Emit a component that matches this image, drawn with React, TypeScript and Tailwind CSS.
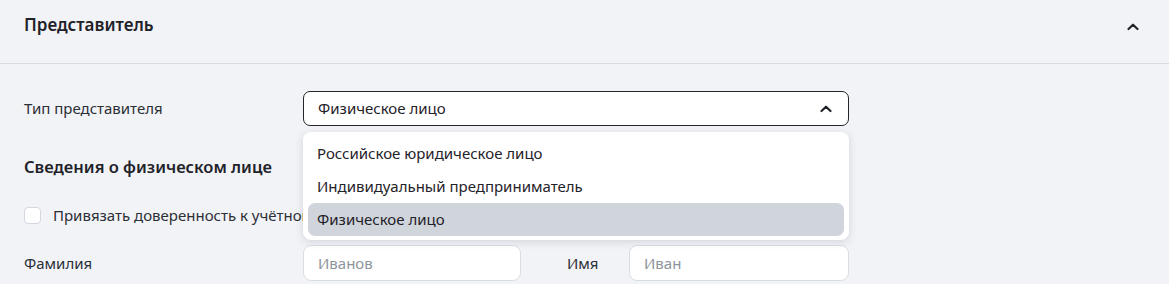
import { useState } from "react";

const options = ["Российское юридическое лицо", "Индивидуальный предприниматель", "Физическое лицо"];

function Caret({ className = "" }: { className?: string }) {
  return (
    <svg viewBox="0 0 16 16" className={className} fill="none" stroke="currentColor" strokeWidth="2.2" strokeLinecap="round" strokeLinejoin="round">
      <path d="M3.5 10L8 5.7L12.5 10" />
    </svg>
  );
}

export default function App() {
  const [value, setValue] = useState("Физическое лицо");
  const [open, setOpen] = useState(true);

  return (
    <div className="w-full h-[284px] overflow-hidden bg-[#f2f3f7] text-[#1f2229] font-['Noto_Sans',sans-serif]">
      {/* Section header */}
      <div className="h-[64px] border-b border-[#d8dbe0] flex items-start justify-between pl-6 pr-[28px] pt-[13px]">
        <h2 className="text-[17px] leading-[24px] font-semibold">Представитель</h2>
        <Caret className="w-[16px] h-[16px] mt-[6px] text-[#1f2229]" />
      </div>

      <div className="px-6 pt-[27px]">
        {/* Representative type */}
        <div className="flex items-center">
          <span className="w-[279px] text-[15px] text-[#2b2f36]">Тип представителя</span>
          <div className="relative w-[546px]">
            <button
              onClick={() => setOpen(!open)}
              className="w-full h-[35px] bg-white border border-[#22252b] rounded-[7px] flex items-center justify-between pl-[14px] pr-[14px] text-[15px] text-left"
            >
              <span>{value}</span>
              <Caret className="w-[16px] h-[16px] text-[#1f2229]" />
            </button>
            {open && (
              <div className="absolute z-10 top-[41px] left-0 right-0 bg-white rounded-[8px] shadow-[0_2px_8px_rgba(30,40,60,0.15)] px-[5px] pt-[5px] pb-[4px]">
                {options.map((o) => (
                  <div
                    key={o}
                    onClick={() => { setValue(o); setOpen(false); }}
                    className={`h-[33px] rounded-[7px] flex items-center px-[9px] text-[15px] cursor-pointer ${o === value ? "bg-[#d0d5dc]" : ""}`}
                  >
                    {o}
                  </div>
                ))}
              </div>
            )}
          </div>
        </div>

        <h3 className="mt-[29px] text-[16.5px] leading-[24px] font-semibold">Сведения о физическом лице</h3>

        {/* Checkbox */}
        <label className="mt-[27px] flex items-center gap-[12px] h-[18px]">
          <span className="w-[17px] h-[17px] bg-white border border-[#d3d7de] rounded-[4px]" />
          <span className="text-[15px] text-[#2b2f36] whitespace-nowrap">Привязать доверенность к учётной записи</span>
        </label>

        {/* Name fields */}
        <div className="mt-[21px] flex items-center">
          <span className="w-[279px] text-[15px] text-[#2b2f36]">Фамилия</span>
          <input
            placeholder="Иванов"
            className="w-[218px] h-[36px] bg-white border border-[#d9dde3] rounded-[8px] px-[14px] text-[15px] placeholder:text-[#8e949c] outline-none"
          />
          <span className="ml-[46px] w-[62px] text-[15px] text-[#2b2f36]">Имя</span>
          <input
            placeholder="Иван"
            className="w-[220px] h-[36px] bg-white border border-[#d9dde3] rounded-[8px] px-[14px] text-[15px] placeholder:text-[#8e949c] outline-none"
          />
        </div>
      </div>
    </div>
  );
}
